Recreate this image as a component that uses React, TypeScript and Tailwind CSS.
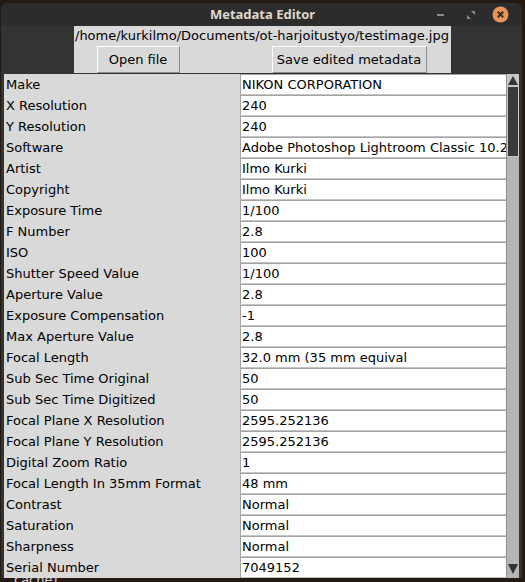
import React from "react";

const rows: [string, string][] = [
  ["Make", "NIKON CORPORATION"],
  ["X Resolution", "240"],
  ["Y Resolution", "240"],
  ["Software", "Adobe Photoshop Lightroom Classic 10.2 (Windows)"],
  ["Artist", "Ilmo Kurki"],
  ["Copyright", "Ilmo Kurki"],
  ["Exposure Time", "1/100"],
  ["F Number", "2.8"],
  ["ISO", "100"],
  ["Shutter Speed Value", "1/100"],
  ["Aperture Value", "2.8"],
  ["Exposure Compensation", "-1"],
  ["Max Aperture Value", "2.8"],
  ["Focal Length", "32.0 mm (35 mm equival"],
  ["Sub Sec Time Original", "50"],
  ["Sub Sec Time Digitized", "50"],
  ["Focal Plane X Resolution", "2595.252136"],
  ["Focal Plane Y Resolution", "2595.252136"],
  ["Digital Zoom Ratio", "1"],
  ["Focal Length In 35mm Format", "48 mm"],
  ["Contrast", "Normal"],
  ["Saturation", "Normal"],
  ["Sharpness", "Normal"],
  ["Serial Number", "7049152"],
];

export default function App() {
  return (
    <div
      className="w-[525px] h-[582px] bg-[#251a12] flex flex-col overflow-hidden"
      style={{ fontFamily: "'DejaVu Sans', sans-serif" }}
    >
      <div className="h-[3px]" />
      <div className="ml-[1px] w-[521px] h-[575px] flex flex-col bg-[#333333] rounded-t-[7px] overflow-hidden">
        {/* title bar */}
        <div className="h-[23px] bg-[#2c2c2c] flex items-center relative">
          <div
            className="w-full text-center text-[13px] font-bold text-[#dcd8d0] pl-[2px]"
            style={{ fontFamily: "'Noto Sans', sans-serif" }}
          >
            Metadata Editor
          </div>
          <div className="absolute right-0 top-0 h-[23px] flex items-center">
            <div className="w-[7px] h-[2px] bg-[#8c8c8c] mr-[23px]" />
            <svg width="8" height="8" viewBox="0 0 8 8" className="mr-[17px]">
              <path d="M8 0 L8 4 L4 0 Z" fill="#8c8c8c" />
              <path d="M0 8 L0 4 L4 8 Z" fill="#8c8c8c" />
            </svg>
            <svg width="17" height="17" viewBox="0 0 17 17" className="mr-[13px]">
              <circle cx="8.5" cy="8.5" r="8" fill="#e9955a" />
              <path d="M5.8 5.8 L11.2 11.2 M11.2 5.8 L5.8 11.2" stroke="#3b2a1e" strokeWidth="2" />
            </svg>
          </div>
        </div>
        {/* header frame */}
        <div className="flex justify-center">
          <div className="w-[377px] bg-[#d9d9d9] flex flex-col ml-[1px]">
            <div className="h-[20px] flex items-center justify-center text-[13px] text-black whitespace-nowrap">
              /home/kurkilmo/Documents/ot-harjoitustyo/testimage.jpg
            </div>
            <div className="h-[27px] flex items-start">
              <div className="ml-[23px] w-[83px] h-[27px] border border-t-white border-l-white border-r-[#8a8a8a] border-b-[#8a8a8a] flex items-center justify-center text-[13px] text-black">
                Open file
              </div>
              <div className="ml-[92px] w-[155px] h-[27px] border border-t-white border-l-white border-r-[#8a8a8a] border-b-[#8a8a8a] flex items-center justify-center text-[13px] text-black whitespace-nowrap">
                Save edited metadata
              </div>
            </div>
          </div>
        </div>
        {/* table */}
        <div className="flex ml-[3px] mt-[1px]">
          <div className="w-[502px] flex flex-col">
            {rows.map(([k, v]) => (
              <div key={k} className="flex h-[21px]">
                <div className="w-[236px] bg-[#d9d9d9] text-[13px] text-black pl-[2px] flex items-center whitespace-nowrap">
                  {k}
                </div>
                <div className="w-[266px] bg-white border-t border-l border-t-[#a3a3a3] border-l-[#a3a3a3] border-b border-b-[#c4c4c4] text-[13px] text-black pl-[1px] flex items-center whitespace-nowrap overflow-hidden">
                  {v}
                </div>
              </div>
            ))}
          </div>
          {/* scrollbar */}
          <div className="w-[13px] h-[504px] bg-[#b5b5b5] border-l border-[#8f8f8f] flex flex-col">
            <div className="h-[12px] bg-[#c8c8c8] flex items-center justify-center">
              <svg width="10" height="9" viewBox="0 0 10 9">
                <path d="M5 0 L10 9 L0 9 Z" fill="#333" />
              </svg>
            </div>
            <div className="h-[71px] bg-[#3a3a3a] border border-[#c8c8c8]" />
            <div className="flex-1" />
            <div className="h-[14px] flex items-center justify-center mb-[2px]">
              <svg width="10" height="10" viewBox="0 0 10 10">
                <path d="M0 0 L10 0 L5 10 Z" fill="#333" />
              </svg>
            </div>
          </div>
        </div>
      </div>
      <div className="h-[4px] overflow-hidden">
        <div className="ml-[14px] h-[4px] leading-[4px] text-[13px] text-[#d0d0d0]">cache)</div>
      </div>
    </div>
  );
}
